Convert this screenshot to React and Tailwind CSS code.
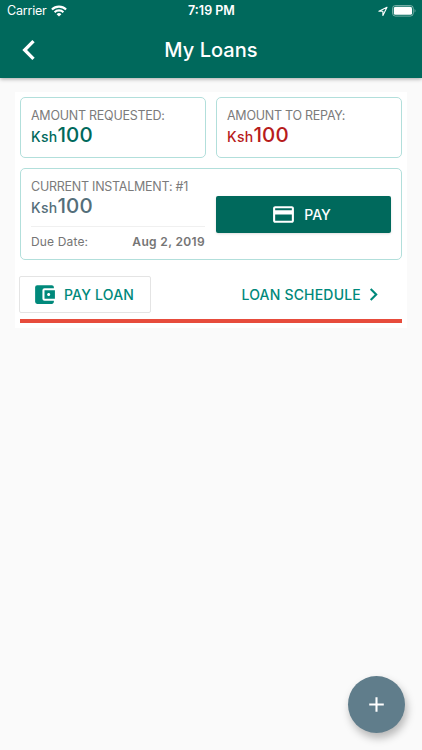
import {
  MdAccountBalanceWallet,
  MdAdd,
  MdChevronLeft,
  MdChevronRight,
  MdCreditCard,
} from "react-icons/md";

const loan = {
  requested: 100,
  repay: 100,
  instalment: { number: 1, amount: 100, due: "Aug 2, 2019" },
};

function StatusBar() {
  return (
    <div className="grid h-[22px] grid-cols-3 items-center pl-[7px] pr-[6px] text-[12.5px] leading-[22px]">
      <div className="flex items-center gap-[4px]">
        <span className="tracking-[-0.2px]">Carrier</span>
        <svg width="16" height="12" viewBox="0 0 16 12" fill="none" stroke="currentColor" strokeWidth="2.1">
          <path d="M.9 4.5a10.1 10.1 0 0 1 14.2 0" />
          <path d="M3.6 7.2a6.3 6.3 0 0 1 8.8 0" />
          <path d="M8 11.6 5.6 9.2a3.5 3.5 0 0 1 4.8 0Z" fill="currentColor" stroke="none" />
        </svg>
      </div>
      <span className="text-center font-semibold">7:19 PM</span>
      <div className="flex items-center justify-end gap-[4px]">
        <svg width="10" height="11" viewBox="0 0 10 11" fill="none" stroke="currentColor" strokeLinejoin="round">
          <path d="M9 1.2.9 5.3h4v4.1Z" strokeWidth="1.1" />
        </svg>
        <svg width="24" height="12" viewBox="0 0 24 12" fill="none">
          <rect x=".5" y=".5" width="20.8" height="10.6" rx="3" stroke="currentColor" strokeOpacity=".45" />
          <rect x="1.8" y="1.8" width="18.2" height="8" rx="1.6" fill="currentColor" />
          <path d="M22.6 4v3.6c1.1-.5 1.1-3.1 0-3.6Z" fill="currentColor" fillOpacity=".5" />
        </svg>
      </div>
    </div>
  );
}

function Amount({ label, value, className }) {
  return (
    <div>
      <div className="text-[12.5px] leading-[16px] tracking-[-0.25px] text-[#7b7b7b]">{label}</div>
      <div className={`-mt-px flex items-baseline leading-[24px] ${className}`}>
        <span className="text-[14px] font-medium tracking-[0.3px]">Ksh</span>
        <span className="text-[20.5px] font-medium tracking-[0.1px]">{value}</span>
      </div>
    </div>
  );
}

function LoanCard() {
  return (
    <section className="mx-[15px] mt-[14px] h-[236px] bg-white px-[5px] pt-[5px]">
      <div className="flex gap-[10px]">
        <div className="h-[61px] flex-1 rounded-[5px] border border-[#b2dfdb] px-[10px] pt-[10px]">
          <Amount label="AMOUNT REQUESTED:" value={loan.requested} className="text-[#00695c]" />
        </div>
        <div className="h-[61px] flex-1 rounded-[5px] border border-[#b2dfdb] px-[10px] pt-[10px]">
          <Amount label="AMOUNT TO REPAY:" value={loan.repay} className="text-[#b71c1c]" />
        </div>
      </div>
      <div className="mt-[10px] flex h-[92px] items-center gap-[11px] rounded-[5px] border border-[#b2dfdb] px-[10px]">
        <div className="h-full w-[174px] pt-[10px]">
          <Amount
            label={`CURRENT INSTALMENT: #${loan.instalment.number}`}
            value={loan.instalment.amount}
            className="text-[#546e7a]"
          />
          <div className="mt-[6px] flex justify-between border-t border-[#f0f0f0] pt-[7px] text-[12px] leading-[16px] tracking-[0.15px] text-[#757575]">
            <span>Due Date:</span>
            <span className="font-semibold tracking-[0.35px]">{loan.instalment.due}</span>
          </div>
        </div>
        <button
          type="button"
          className="flex h-[37px] flex-1 items-center justify-center gap-[8px] rounded-[2px] bg-[#00695c] pr-[5px] text-[14px] font-medium text-white shadow-sm"
        >
          <MdCreditCard size={25} />
          PAY
        </button>
      </div>
      <div className="mt-[16px] flex h-[37px] items-center justify-between pr-[16px] text-[14px] font-medium text-[#00897b]">
        <button
          type="button"
          className="-ml-px flex h-full w-[132px] items-center gap-[7px] rounded-[2px] border border-[#e4e4e4] pl-[12px] tracking-[0.2px]"
        >
          <MdAccountBalanceWallet size={25} />
          PAY LOAN
        </button>
        <button type="button" className="flex items-center tracking-[0.2px]">
          LOAN SCHEDULE
          <MdChevronRight size={25} />
        </button>
      </div>
      <div className="mt-[6px] h-[4px] bg-[#e74c3c]" />
    </section>
  );
}

export default function App() {
  return (
    <div className="relative h-[750px] w-[422px] overflow-hidden bg-[#fafafa] font-[Inter,sans-serif]">
      <header className="h-[78px] bg-[#00695c] text-white shadow-[0_1px_4px_rgba(0,0,0,0.35)]">
        <StatusBar />
        <div className="grid h-[55px] grid-cols-[60px_1fr_60px] items-center">
          <button type="button" aria-label="Back" className="pl-[9px]">
            <MdChevronLeft size={40} />
          </button>
          <h1 className="text-center text-[20px] font-medium tracking-[0.05px]">My Loans</h1>
        </div>
      </header>
      <LoanCard />
      <button
        type="button"
        aria-label="Add loan"
        className="absolute bottom-[17px] right-[17px] grid h-[57px] w-[57px] place-items-center rounded-full bg-[#607d8b] text-white shadow-[2px_5px_8px_rgba(0,0,0,0.28)]"
      >
        <MdAdd size={25} />
      </button>
    </div>
  );
}
